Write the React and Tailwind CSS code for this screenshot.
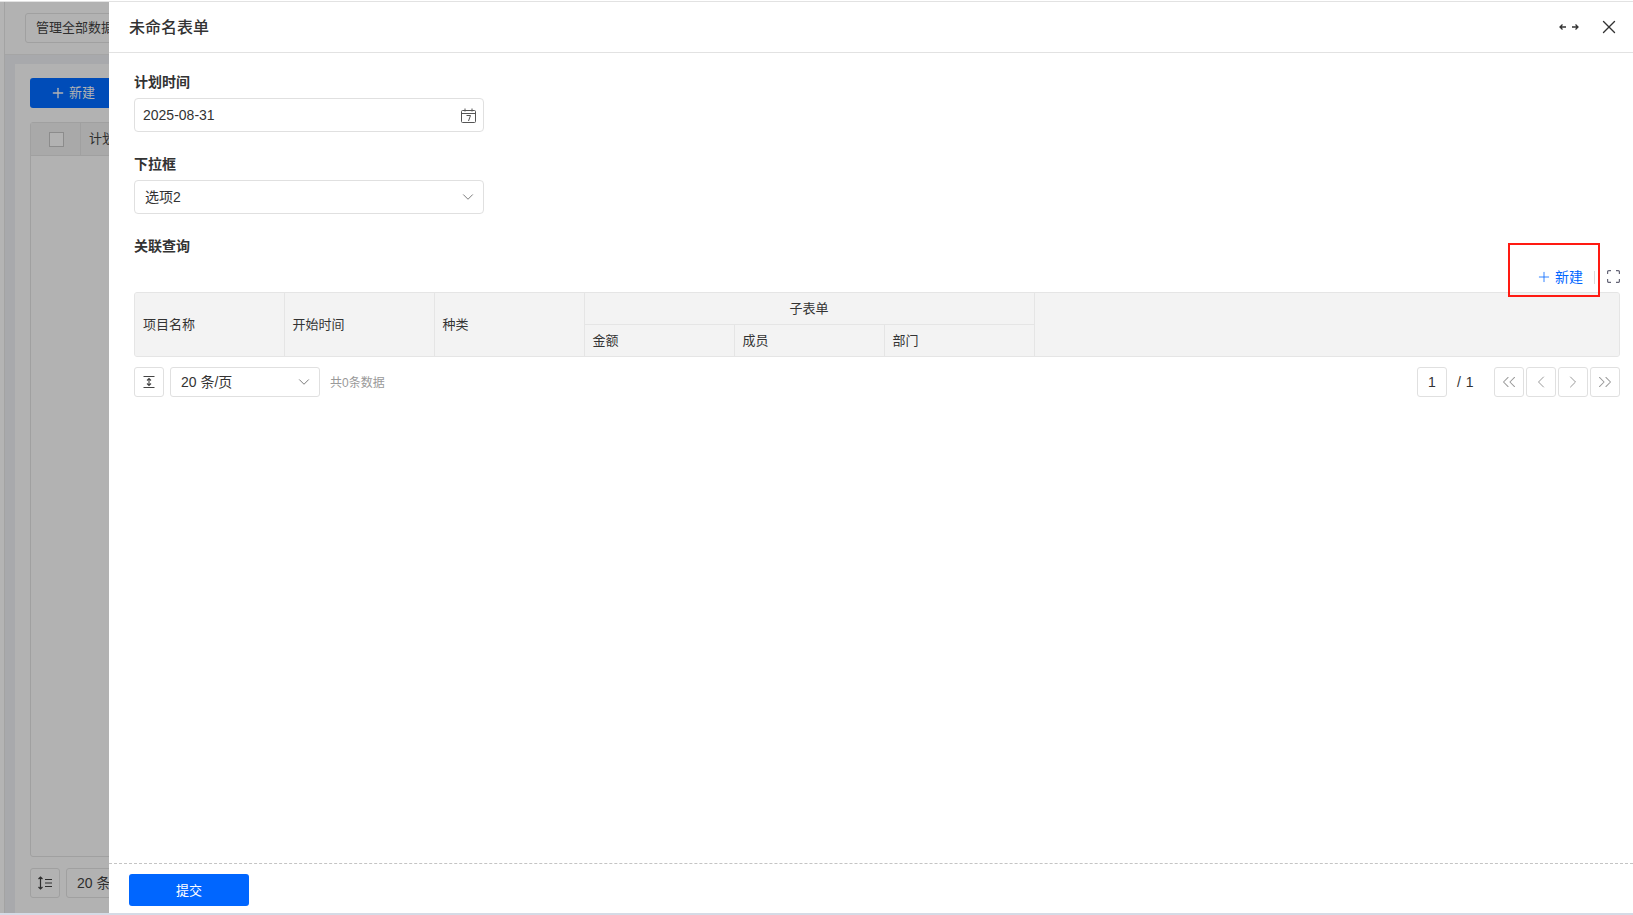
import React from "react";
import { ChevronDown, ChevronLeft, ChevronRight, ChevronsLeft, ChevronsRight, Plus, X } from "lucide-react";

function Th({ className = "", children, ...p }) {
  return <th {...p} className={`border-r border-b border-[#e5e5e5] bg-[#f3f3f3] px-2 font-normal text-[13px] text-[#333] ${className}`}>{children}</th>;
}

function PageBtn({ children }) {
  return <div className="flex h-[30px] w-[30px] items-center justify-center rounded-[3px] border border-[#e0e0e0] text-[#999]">{children}</div>;
}

function Background() {
  return (
    <div className="flex h-full w-full overflow-hidden bg-[#b2b2b2]">
      <div className="w-[5px] shrink-0 border-r border-[#a3a3a3] bg-[#b4b4b4]" />
      <div className="flex min-w-0 flex-1 flex-col">
        <div className="flex h-[53px] shrink-0 items-start border-b border-[#a5a5a5] pl-[20px] pt-[11px]">
          <div className="flex h-[30px] w-[140px] shrink-0 items-center rounded-[3px] border border-[#a0a0a0] pl-[10px] text-[13px] text-[#2e2e2e] whitespace-nowrap">管理全部数据</div>
        </div>
        <div className="flex min-h-0 flex-1 bg-[#a8a9ac] pl-[10px] pt-[9px]">
          <div className="flex flex-1 flex-col bg-[#b2b2b2] pl-[15px] pt-[14px]">
            <div className="flex h-[30px] w-[120px] items-center gap-[3px] rounded-[3px] bg-[#004cb8] pl-[20px] text-[13px] text-[#b3b3b3]">
              <Plus size={16} strokeWidth={2} />
              <span>新建</span>
            </div>
            <div className="mt-[14px] h-[735px] rounded-[3px] border border-[#a0a0a0]">
              <div className="flex h-[33px] border-b border-[#a0a0a0] bg-[#a9a9a9]">
                <div className="flex w-[50px] items-center justify-center border-r border-[#a0a0a0] pl-[1px]">
                  <div className="h-[15px] w-[15px] border border-[#8c8c8c] bg-[#b2b2b2]" />
                </div>
                <div className="flex items-center pl-2 text-[13px] text-[#2e2e2e]">计划时间</div>
              </div>
            </div>
            <div className="mt-[11px] flex gap-[6px]">
              <div className="flex h-[30px] w-[30px] items-center justify-center rounded-[3px] border border-[#a0a0a0] text-[#2e2e2e]">
                <svg width="16" height="14" viewBox="0 0 16 14" fill="none" stroke="currentColor" strokeWidth="1.2"><path d="M3.500 1v12M1.500 3l2-2 2 2M1.500 11l2 2 2-2M8 3.500h7M8 7h7M8 10.500h7" /></svg>
              </div>
              <div className="flex h-[30px] w-[150px] items-center rounded-[3px] border border-[#a0a0a0] pl-[10px] text-[14px] text-[#2e2e2e]">20 条/页</div>
            </div>
          </div>
        </div>
      </div>
    </div>
  );
}

export default function App() {
  return (
    <div className="relative flex h-[915px] w-[1633px] flex-col overflow-hidden bg-white font-['Liberation_Sans','Noto_Sans_CJK_SC',sans-serif]">
      <div className="h-[1px] shrink-0 bg-white" />
      <div className="h-[1px] shrink-0 bg-[#e2e2e2]" />
      <div className="min-h-0 flex-1">
        <Background />
      </div>
      <div className="h-[2px] shrink-0 bg-[#d5dbe6]" />

      <div className="absolute bottom-[2px] left-[109px] right-0 top-[2px] flex flex-col bg-white">
        <div className="flex h-[51px] shrink-0 items-center justify-between border-b border-[#e2e2e2] pl-[20px] pr-[13px]">
          <span className="pt-[1px] text-[16px] font-medium text-[#333]">未命名表单</span>
          <div className="flex items-center gap-[19px] text-[#333]">
            <svg width="20" height="10" viewBox="0 0 20 10" fill="none" stroke="currentColor" strokeWidth="1.3"><path d="M7 5H1M3.500 2.500 1 5l2.500 2.500M13 5h6M16.500 2.500 19 5l-2.500 2.500" /></svg>
            <X size={22} strokeWidth={1.5} />
          </div>
        </div>
        <div className="flex min-h-0 flex-1 flex-col pl-[25px] pr-[13px] pt-[20px]">
          <label className="text-[14px] font-bold leading-[18px] text-[#333]">计划时间</label>
          <div className="mt-[7px] flex h-[34px] w-[350px] items-center justify-between rounded-[4px] border border-[#e0e0e0] pl-2 pr-[7px] text-[14px] text-[#333]">
            <span>2025-08-31</span>
            <svg width="15" height="15" viewBox="0 0 15 15" fill="none" stroke="#555" strokeWidth="1"><rect x="0.500" y="2.500" width="14" height="12" rx="1" /><path d="M0.500 5.500h14M4 0.500v3M11 0.500v3" /><path d="M5.500 7.500h4L7.500 13" /></svg>
          </div>
          <label className="mt-[23px] text-[14px] font-bold leading-[18px] text-[#333]">下拉框</label>
          <div className="mt-[7px] flex h-[34px] w-[350px] items-center justify-between rounded-[4px] border border-[#e0e0e0] pl-[10px] pr-[6px] text-[14px] text-[#333]">
            <span>选项2</span>
            <ChevronDown size={18} strokeWidth={1.3} className="text-[#777]" />
          </div>
          <label className="mt-[23px] text-[14px] font-bold leading-[18px] text-[#333]">关联查询</label>
          <div className="mt-[8px] flex h-[28px] items-center justify-end text-[14px]">
            <div className="flex items-center gap-[3px] text-[#0066ff]">
              <Plus size={16} strokeWidth={1.2} />
              <span>新建</span>
            </div>
            <div className="ml-[11px] h-[13px] w-[1px] bg-[#dcdcdc]" />
            <svg className="mb-[1px] ml-[12px]" width="13" height="13" viewBox="0 0 13 13" fill="none" stroke="#667" strokeWidth="1.200"><path d="M0.600 4V1.800a1.200 1.200 0 0 1 1.200-1.200H4M9 0.600h2.200a1.200 1.200 0 0 1 1.200 1.200V4M12.400 9v2.200a1.200 1.200 0 0 1-1.200 1.200H9M4 12.400H1.800a1.200 1.200 0 0 1-1.200-1.200V9" /></svg>
          </div>
          <div className="mt-[1px] h-[65px] overflow-hidden rounded-[3px] border border-[#e5e5e5] bg-[#f3f3f3]">
            <table className="h-full w-full table-fixed border-collapse">
              <colgroup>
                <col className="w-[149px]" /><col className="w-[150px]" /><col className="w-[150px]" />
                <col className="w-[150px]" /><col className="w-[150px]" /><col className="w-[150px]" /><col />
              </colgroup>
              <thead>
                <tr className="h-[31px]">
                  <Th rowSpan={2} className="border-b-0 text-left">项目名称</Th>
                  <Th rowSpan={2} className="border-b-0 text-left">开始时间</Th>
                  <Th rowSpan={2} className="border-b-0 text-left">种类</Th>
                  <Th colSpan={3} className="text-center">子表单</Th>
                  <Th rowSpan={2} className="border-r-0 border-b-0" />
                </tr>
                <tr className="h-[32px]">
                  <Th className="border-b-0 text-left">金额</Th>
                  <Th className="border-b-0 text-left">成员</Th>
                  <Th className="border-b-0 text-left">部门</Th>
                </tr>
              </thead>
            </table>
          </div>
          <div className="mt-[10px] flex h-[30px] items-center">
            <div className="flex h-[30px] w-[30px] items-center justify-center rounded-[3px] border border-[#e0e0e0] text-[#444]">
              <svg width="14" height="14" viewBox="0 0 14 14" fill="none" stroke="currentColor" strokeWidth="1.100"><path d="M1.500 1.500h11M1.500 12.500h11M7 3.500v7M5 5.500l2-2 2 2M5 8.500l2 2 2-2" /></svg>
            </div>
            <div className="ml-[6px] flex h-[30px] w-[150px] items-center justify-between rounded-[3px] border border-[#e0e0e0] pl-[10px] pr-[6px] text-[14px] text-[#333]">
              <span>20 条/页</span>
              <ChevronDown size={18} strokeWidth={1.3} className="text-[#777]" />
            </div>
            <span className="ml-[10px] pt-[1px] text-[12px] text-[#999]">共0条数据</span>
            <div className="ml-auto flex h-[30px] w-[30px] items-center justify-center rounded-[3px] border border-[#e0e0e0] text-[14px] text-[#333]">1</div>
            <span className="ml-[10px] w-[37px] text-[14px] tracking-[0.5px] text-[#333]">/ 1</span>
            <div className="flex gap-[2px]">
              <PageBtn><ChevronsLeft size={22} strokeWidth={1.1} /></PageBtn>
              <PageBtn><ChevronLeft size={20} strokeWidth={1.2} /></PageBtn>
              <PageBtn><ChevronRight size={20} strokeWidth={1.2} /></PageBtn>
              <PageBtn><ChevronsRight size={22} strokeWidth={1.1} /></PageBtn>
            </div>
          </div>
        </div>
        <div className="flex h-[50px] shrink-0 items-start border-t border-dashed border-[#c4c4c4] pl-[20px] pt-[10px]">
          <div className="flex h-[32px] w-[120px] items-center justify-center rounded-[3px] bg-[#0066ff] pt-[1px] text-[13px] text-white">提交</div>
        </div>
      </div>

      <div className="absolute left-[1508px] top-[243px] h-[54px] w-[92px] border-2 border-[#ff1a12]" />
    </div>
  );
}
